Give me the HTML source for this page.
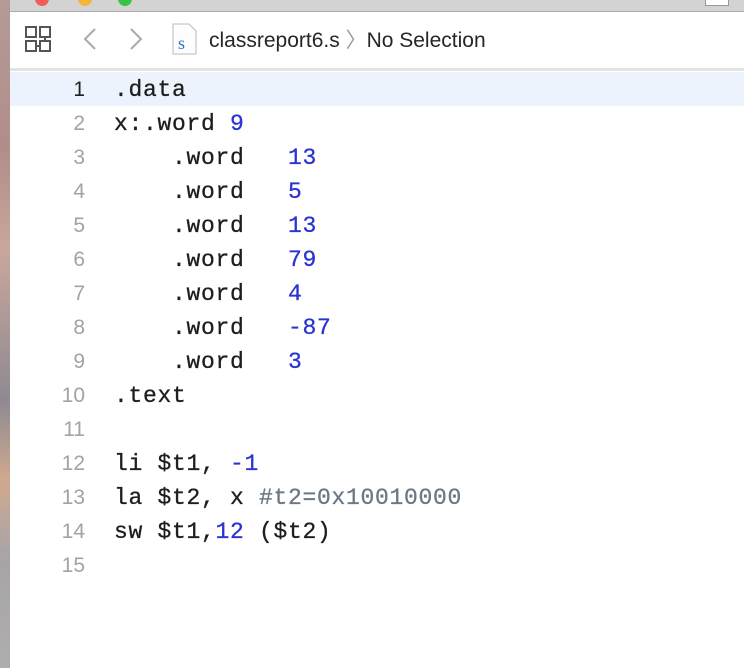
<!DOCTYPE html>
<html><head><style>
body{margin:0;width:744px;height:668px;overflow:hidden;background:#fff;position:relative;font-family:"Liberation Sans",sans-serif}
.strip{position:absolute;left:0;top:0;width:10px;height:668px;background:linear-gradient(#b49a98 0,#b08e8a 150px,#c9a79c 250px,#8e8a92 400px,#d0a890 480px,#a7a4a8 560px,#b0adb0 668px)}
.title{position:absolute;left:10px;top:0;width:734px;height:11px;background:#d3d3d3;border-bottom:1px solid #aaa}
.dot{position:absolute;top:-8px;width:14px;height:14px;border-radius:50%}
.tb{position:absolute;left:10px;top:12px;width:734px;height:56px;background:#fff}
.sep{position:absolute;left:10px;top:68px;width:734px;height:3px;background:#e3e3e3}
.hl{position:absolute;left:10px;top:72px;width:734px;height:34px;background:#ecf3fd}
.code{position:absolute;left:10px;top:73px;font-family:"Liberation Mono",monospace;font-size:23px;letter-spacing:0.7px}
.ln{height:34px;line-height:34px;white-space:pre;position:relative}
.n{position:absolute;left:15px;width:60px;text-align:right;color:#a3a3a3;letter-spacing:0;font-family:"Liberation Sans",sans-serif;font-size:21px}
.t{position:absolute;left:104px;color:#1e1e1e;-webkit-text-stroke:0.3px #1e1e1e}
.b{color:#2b34d3;-webkit-text-stroke:0.3px #2b34d3}.c{color:#6c7884;-webkit-text-stroke:0.3px #6c7884}
</style></head><body>
<div class="strip"></div>
<div class="title">
<div class="dot" style="left:25px;background:#f25d55"></div>
<div class="dot" style="left:68px;background:#f5b53c"></div>
<div class="dot" style="left:108px;background:#35c443"></div>
<div style="position:absolute;left:695px;top:-2px;width:22px;height:6px;background:#fff;border:1px solid #999"></div>
</div>
<div class="tb">
<svg style="position:absolute;left:15px;top:14px" width="26" height="26" viewBox="0 0 26 26" fill="none" stroke="#555" stroke-width="2"><rect x="1" y="1" width="10" height="10"/><rect x="15" y="1" width="10" height="10"/><rect x="1" y="15" width="10" height="10"/><rect x="15" y="15" width="10" height="10"/><path d="M11 20h4M20 11v4"/></svg>
<svg style="position:absolute;left:72px;top:15px" width="16" height="24" viewBox="0 0 16 24" fill="none" stroke="#aaa" stroke-width="2"><path d="M13 2L3 12l10 10"/></svg>
<svg style="position:absolute;left:118px;top:15px" width="16" height="24" viewBox="0 0 16 24" fill="none" stroke="#aaa" stroke-width="2"><path d="M3 2l10 10L3 22"/></svg>
<svg style="position:absolute;left:162px;top:11px" width="26" height="32" viewBox="0 0 26 32"><path d="M1 1h16l7 7v23H1z" fill="#fdfdfd" stroke="#bbb"/><text x="6" y="26" font-family="Liberation Serif" font-size="18" fill="#2f6fd0">s</text></svg>
<div style="position:absolute;left:199px;top:12px;font-size:21px;color:#262626">classreport6.s <span style="color:#999">〉</span>No Selection</div>
</div>
<div class="sep"></div>
<div class="hl"></div>
<div class="code">
<div class="ln"><span class="n" style="color:#222">1</span><span class="t">.data</span></div>
<div class="ln"><span class="n">2</span><span class="t">x:.word <span class="b">9</span></span></div>
<div class="ln"><span class="n">3</span><span class="t">    .word   <span class="b">13</span></span></div>
<div class="ln"><span class="n">4</span><span class="t">    .word   <span class="b">5</span></span></div>
<div class="ln"><span class="n">5</span><span class="t">    .word   <span class="b">13</span></span></div>
<div class="ln"><span class="n">6</span><span class="t">    .word   <span class="b">79</span></span></div>
<div class="ln"><span class="n">7</span><span class="t">    .word   <span class="b">4</span></span></div>
<div class="ln"><span class="n">8</span><span class="t">    .word   <span class="b">-87</span></span></div>
<div class="ln"><span class="n">9</span><span class="t">    .word   <span class="b">3</span></span></div>
<div class="ln"><span class="n">10</span><span class="t">.text</span></div>
<div class="ln"><span class="n">11</span></div>
<div class="ln"><span class="n">12</span><span class="t">li $t1, <span class="b">-1</span></span></div>
<div class="ln"><span class="n">13</span><span class="t">la $t2, x <span class="c">#t2=0x10010000</span></span></div>
<div class="ln"><span class="n">14</span><span class="t">sw $t1,<span class="b">12</span> ($t2)</span></div>
<div class="ln"><span class="n">15</span></div>
</div>
</body></html>
